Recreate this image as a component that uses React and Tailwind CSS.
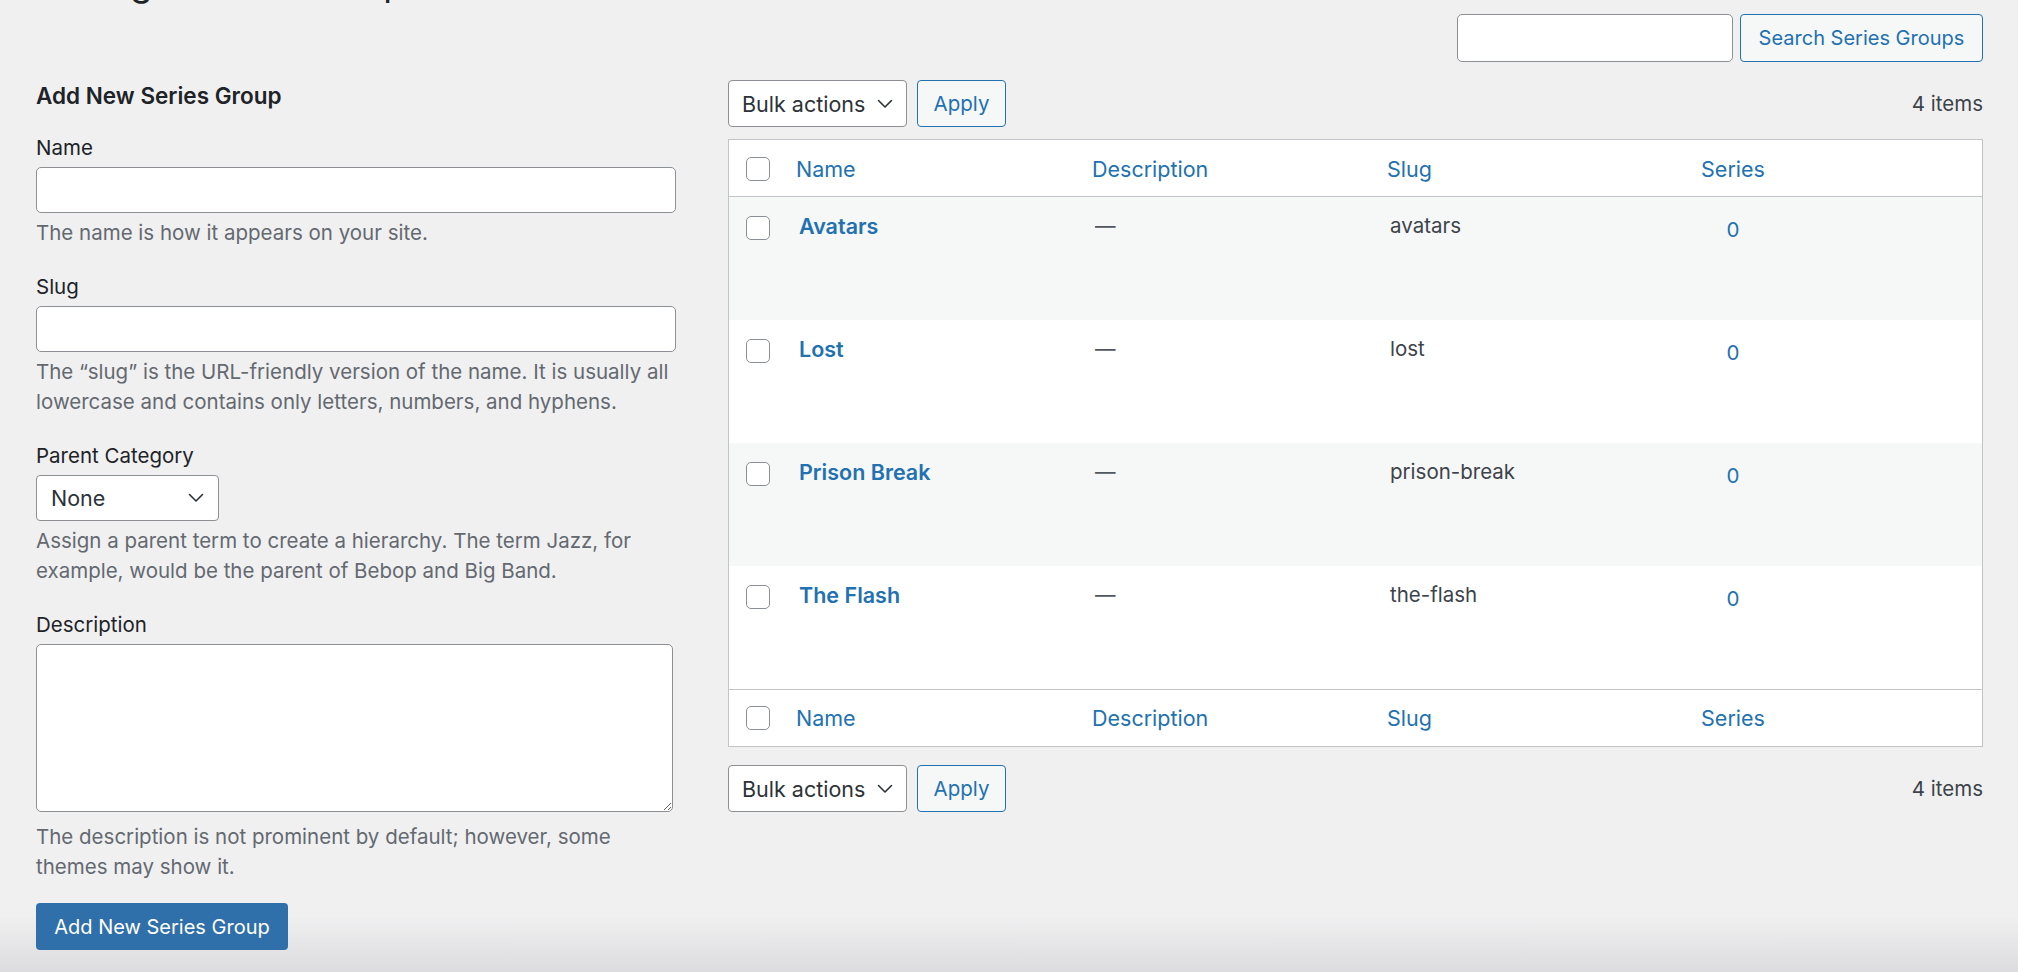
import React from 'react';

function Chevron() {
  return (
    <svg width="16" height="10" viewBox="0 0 16 10" fill="none" className="shrink-0">
      <path d="M1.5 1.5L8 8l6.5-6.5" stroke="#2c3338" strokeWidth="1.6" strokeLinecap="round" strokeLinejoin="round" />
    </svg>
  );
}

function Checkbox() {
  return <span className="block w-6 h-6 rounded-[5px] border border-[#8c8f94] bg-white" />;
}

function BulkBar() {
  return (
    <div className="flex items-center h-[47px]">
      <div className="flex items-center justify-between w-[179px] h-[47px] pl-[13px] pr-[13px] bg-white border border-[#8c8f94] rounded-[4px] text-[21.5px] text-[#2c3338]">
        <span>Bulk actions</span>
        <Chevron />
      </div>
      <button className="ml-[10px] w-[89px] h-[47px] rounded-[4px] border border-[#2271b1] bg-[#f6f7f7] text-[#2271b1]">
        Apply
      </button>
      <span className="ml-auto text-[#3c434a]">4 items</span>
    </div>
  );
}

function HeadRow({ top }) {
  return (
    <div
      className={
        top
          ? 'grid grid-cols-[57px_296px_295px_314px_84px_1fr] items-center h-[57px] pt-[2px] border-b border-[#c3c4c7] text-[21.5px] text-[#2271b1]'
          : 'grid grid-cols-[57px_296px_295px_314px_84px_1fr] items-center h-[57px] pb-[1px] border-t border-[#c3c4c7] text-[21.5px] text-[#2271b1]'
      }
    >
      <div className="pl-[17px]">
        <Checkbox />
      </div>
      <div className="pl-[10px]">Name</div>
      <div className="pl-[10px]">Description</div>
      <div className="pl-[10px]">Slug</div>
      <div className="text-center">Series</div>
      <div />
    </div>
  );
}

const rows = [
  { name: 'Avatars', slug: 'avatars' },
  { name: 'Lost', slug: 'lost' },
  { name: 'Prison Break', slug: 'prison-break' },
  { name: 'The Flash', slug: 'the-flash' },
];

function Field({ label, children, desc }) {
  return (
    <div className="mt-6">
      <div className="text-[#1d2327] mb-1">{label}</div>
      {children}
      {desc}
    </div>
  );
}

export default function App() {
  return (
    <div className="w-full h-[972px] overflow-hidden bg-[linear-gradient(to_bottom,#f0f0f1_0px,#f0f0f1_915px,#dcdcde_972px)] font-['Inter','Noto_Sans',sans-serif] text-[20.5px] leading-[30px] text-[#3c434a] pr-[35px] pl-[36px]">
      <h1 className="-mt-[39px] h-[44px] text-[36px] leading-[44px] text-[#1d2327]">Manage Series Groups</h1>

      <div className="flex justify-end items-center gap-[7px] mt-[9px]">
        <input className="w-[276px] h-[48px] bg-white border border-[#8c8f94] rounded-[5px]" />
        <button className="w-[243px] h-[48px] rounded-[4px] border border-[#2271b1] bg-[#f6f7f7] text-[20px] text-[#2271b1]">
          Search Series Groups
        </button>
      </div>

      <div className="flex gap-[52px] mt-[18px]">
        <div className="w-[640px] shrink-0">
          <h2 className="mt-[2px] text-[22.5px] leading-[28px] font-semibold text-[#1d2327]">Add New Series Group</h2>

          <div className="mt-[23px]">
            <div className="text-[#1d2327] mb-1">Name</div>
            <input className="block w-full h-[46px] bg-white border border-[#8c8f94] rounded-[5px]" />
            <p className="mt-[5px] text-[#646970]">The name is how it appears on your site.</p>
          </div>

          <Field
            label="Slug"
            desc={
              <p className="mt-[5px] text-[#646970]">
                The “slug” is the URL-friendly version of the name. It is usually all lowercase and contains only
                letters, numbers, and hyphens.
              </p>
            }
          >
            <input className="block w-full h-[46px] bg-white border border-[#8c8f94] rounded-[5px]" />
          </Field>

          <Field
            label="Parent Category"
            desc={
              <p className="mt-[5px] text-[#646970]">
                Assign a parent term to create a hierarchy. The term Jazz, for example, would be the parent of Bebop
                and Big Band.
              </p>
            }
          >
            <div className="flex items-center justify-between w-[183px] h-[46px] pl-[14px] pr-[14px] bg-white border border-[#8c8f94] rounded-[4px] text-[21.5px] text-[#2c3338]">
              <span>None</span>
              <Chevron />
            </div>
          </Field>

          <Field
            label="Description"
            desc={
              <p className="mt-[10px] text-[#646970]">
                The description is not prominent by default; however, some themes may show it.
              </p>
            }
          >
            <textarea className="block w-[637px] h-[168px] bg-white border border-[#8c8f94] rounded-[5px] resize" />
          </Field>

          <button className="mt-[21px] w-[252px] h-[47px] rounded-[4px] bg-[#3070aa] text-[20px] text-white">
            Add New Series Group
          </button>
        </div>

        <div className="flex-1 min-w-0">
          <BulkBar />

          <div className="mt-3 bg-white border border-[#c3c4c7]">
            <HeadRow top />
            {rows.map((r, i) => (
              <div
                key={r.slug}
                className={
                  i % 2 === 0
                    ? 'grid grid-cols-[57px_296px_295px_314px_84px_1fr] items-start h-[123px] bg-[#f6f7f7]'
                    : 'grid grid-cols-[57px_296px_295px_314px_84px_1fr] items-start h-[123px] bg-white'
                }
              >
                <div className="pl-[17px] pt-[19px]">
                  <Checkbox />
                </div>
                <div className="pl-[13px] pt-[14px] text-[21.5px] font-semibold text-[#2271b1]">{r.name}</div>
                <div className="pl-[13px] pt-[14px] text-[#50575e]">—</div>
                <div className="pl-[13px] pt-[14px] text-[#3c434a]">{r.slug}</div>
                <div className="pt-[18px] text-center text-[#2271b1]">0</div>
                <div />
              </div>
            ))}
            <HeadRow />
          </div>

          <div className="mt-[18px]">
            <BulkBar />
          </div>
        </div>
      </div>
    </div>
  );
}
